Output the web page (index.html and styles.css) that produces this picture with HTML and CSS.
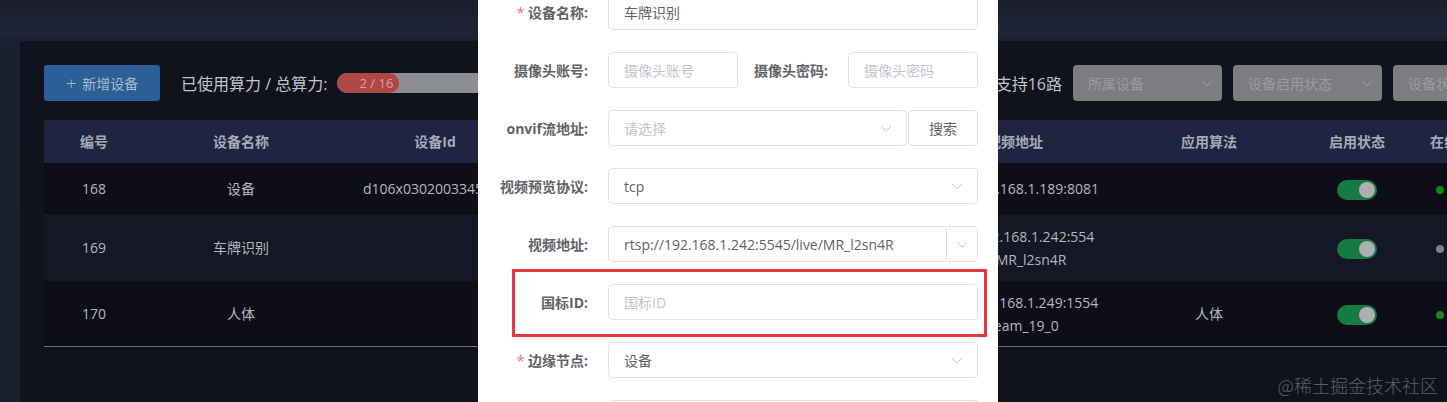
FILE: index.html
```html
<!DOCTYPE html>
<html lang="zh-CN">
<head>
<meta charset="utf-8">
<title>设备管理</title>
<link rel="stylesheet" href="styles.css">
</head>
<body>
<div class="page">
  <div class="card">
    <div class="toolbar">
      <button class="btn-add"><span class="plus">+</span> 新增设备</button>
      <span class="usage-label">已使用算力 / 总算力:</span>
      <div class="progress"><div class="progress-fill" style="width:62px">2 / 16</div></div>
      <span class="hint">最多支持16路</span>
      <div class="filter"><span>所属设备</span><svg class="chev" viewBox="0 0 12 7"><path d="M1 1 L6 6 L11 1"/></svg></div>
      <div class="filter"><span>设备启用状态</span><svg class="chev" viewBox="0 0 12 7"><path d="M1 1 L6 6 L11 1"/></svg></div>
      <div class="filter"><span>设备状态</span><svg class="chev" viewBox="0 0 12 7"><path d="M1 1 L6 6 L11 1"/></svg></div>
    </div>

    <div class="table">
      <div class="row head">
        <div class="cell">编号</div>
        <div class="cell">设备名称</div>
        <div class="cell">设备Id</div>
        <div class="cell">视频源类型</div>
        <div class="cell">视频地址</div>
        <div class="cell">应用算法</div>
        <div class="cell">启用状态</div>
        <div class="cell left">在线状态</div>
      </div>
      <div class="row body r1">
        <div class="cell">168</div>
        <div class="cell">设备</div>
        <div class="cell">d106x0302003345678</div>
        <div class="cell">onvif</div>
        <div class="cell">http://192.168.1.189:8081</div>
        <div class="cell"></div>
        <div class="cell"><span class="switch"><span class="knob"></span></span></div>
        <div class="cell left dotcell"><span class="dot on"></span>在线</div>
      </div>
      <div class="row body r2">
        <div class="cell">169</div>
        <div class="cell">车牌识别</div>
        <div class="cell"></div>
        <div class="cell">rtsp</div>
        <div class="cell">rtsp://192.168.1.242:554<br>/live/MR_l2sn4R</div>
        <div class="cell"></div>
        <div class="cell"><span class="switch"><span class="knob"></span></span></div>
        <div class="cell left dotcell"><span class="dot off"></span>离线</div>
      </div>
      <div class="row body r3">
        <div class="cell">170</div>
        <div class="cell">人体</div>
        <div class="cell"></div>
        <div class="cell">rtsp</div>
        <div class="cell">rtsp://192.168.1.249:1554<br>/stream_19_0</div>
        <div class="cell">人体</div>
        <div class="cell"><span class="switch"><span class="knob"></span></span></div>
        <div class="cell left dotcell"><span class="dot on"></span>在线</div>
      </div>
    </div>
  </div>

  <div class="modal">
    <div class="form">
      <div class="frow">
        <label class="flabel"><span class="req">*</span> 设备名称:</label>
        <div class="input"><span class="val">车牌识别</span></div>
      </div>
      <div class="frow">
        <label class="flabel">摄像头账号:</label>
        <div class="input small"><span class="ph">摄像头账号</span></div>
        <label class="flabel mid">摄像头密码:</label>
        <div class="input small"><span class="ph">摄像头密码</span></div>
      </div>
      <div class="frow">
        <label class="flabel">onvif流地址:</label>
        <div class="input select grow"><span class="ph">请选择</span><svg class="chev light" viewBox="0 0 12 7"><path d="M1 1 L6 6 L11 1"/></svg></div>
        <button class="btn-search">搜索</button>
      </div>
      <div class="frow">
        <label class="flabel">视频预览协议:</label>
        <div class="input select"><span class="val">tcp</span><svg class="chev light" viewBox="0 0 12 7"><path d="M1 1 L6 6 L11 1"/></svg></div>
      </div>
      <div class="frow">
        <label class="flabel">视频地址:</label>
        <div class="input combo">
          <div class="combo-main"><span class="val">rtsp://192.168.1.242:5545/live/MR_l2sn4R</span></div>
          <div class="combo-arrow"><svg class="chev light" viewBox="0 0 12 7"><path d="M1 1 L6 6 L11 1"/></svg></div>
        </div>
      </div>
      <div class="frow marked">
        <div class="mark"></div>
        <label class="flabel">国标ID:</label>
        <div class="input"><span class="ph">国标ID</span></div>
      </div>
      <div class="frow">
        <label class="flabel"><span class="req">*</span> 边缘节点:</label>
        <div class="input select"><span class="val">设备</span><svg class="chev light" viewBox="0 0 12 7"><path d="M1 1 L6 6 L11 1"/></svg></div>
      </div>
      <div class="frow">
        <label class="flabel">备注:</label>
        <div class="input"></div>
      </div>
    </div>
  </div>

  <div class="watermark">@稀土掘金技术社区</div>
</div>
</body>
</html>
```

FILE: styles.css
```css
* { box-sizing: border-box; }
html, body { margin: 0; padding: 0; }
body {
  width: 1447px;
  height: 402px;
  overflow: hidden;
  background: #1a1f2d;
  font-family: "Open Sans", "Noto Sans CJK SC", sans-serif;
  font-size: 14px;
}
.page {
  position: relative;
  width: 1447px;
  height: 402px;
  padding: 41px 0 0 20px;
  background: linear-gradient(180deg, #1a1e2c 0px, #1f2537 30px, #1b2030 41px, #1a1f2c 100%);
  overflow: hidden;
}
.card {
  width: 1520px;
  height: 400px;
  background: #10131e;
  border-radius: 4px 0 0 0;
  padding: 24px 0 0 24px;
}

/* toolbar */
.toolbar {
  display: flex;
  align-items: center;
  height: 36px;
  width: 1509px;
}
.btn-add {
  width: 116px;
  height: 36px;
  border: none;
  border-radius: 3px;
  background: #2a5f97;
  color: #aab9cb;
  font-family: inherit;
  font-size: 14px;
  padding: 0;
  margin-right: 21px;
}
.btn-add .plus { font-size: 19px; font-weight: 300; vertical-align: -1px; margin-right: 2px; }
.usage-label {
  color: #c2c4ca;
  font-size: 16px;
  margin-right: 10px;
  white-space: nowrap;
}
.progress {
  width: 400px;
  height: 20px;
  border-radius: 10px;
  background: #8d8e91;
  overflow: hidden;
}
.progress-fill {
  height: 20px;
  border-radius: 10px;
  background: #b14646;
  color: #d9a3a3;
  font-size: 13px;
  line-height: 20px;
  text-align: right;
  padding-right: 6px;
  white-space: nowrap;
}
.hint {
  flex: 1;
  text-align: right;
  color: #c2c4ca;
  font-size: 16px;
  white-space: nowrap;
  padding-right: 11px;
}
.filter {
  flex: none;
  width: 149px;
  height: 36px;
  margin-right: 11px;
  border-radius: 4px;
  background: #7c7d80;
  display: flex;
  align-items: center;
  justify-content: space-between;
  padding: 0 9px 0 15px;
  color: #9b9c9e;
  font-size: 14px;
}
.chev {
  width: 12px;
  height: 7px;
  fill: none;
  stroke: #9b9c9e;
  stroke-width: 1;
}
.chev.light { stroke: #c0c4cc; }

/* table */
.table {
  margin-top: 19px;
  width: 1500px;
}
.row {
  display: grid;
  grid-template-columns: 100px 194px 194px 392px 182px 206px 90px 116px;
  align-items: center;
}
.row .cell {
  text-align: center;
  white-space: nowrap;
  line-height: 23px;
}
.row .cell.left { text-align: left; padding-left: 28px; }
.row .cell.dotcell { padding-left: 34px; }
.head {
  height: 43px;
  background: #1e2541;
  color: #a7abb7;
  font-weight: 700;
}
.body { color: #b5b7bd; }
.r1 { height: 51px; background: #0d0e1a; border-bottom: 1px solid #0a0b13; }
.r2 { height: 67px; background: #131726; }
.r3 { height: 66px; background: #0d0e1a; border-bottom: 1px solid #6c6f7a; }
.switch {
  display: inline-block;
  width: 40px;
  height: 20px;
  border-radius: 10px;
  background: #177a40;
  position: relative;
  vertical-align: middle;
}
.knob {
  position: absolute;
  right: 2px;
  top: 2px;
  width: 16px;
  height: 16px;
  border-radius: 50%;
  background: #aeafb1;
}
.dot {
  display: inline-block;
  width: 8px;
  height: 8px;
  border-radius: 50%;
  margin-right: 8px;
  vertical-align: middle;
}
.dot.on { background: #16871a; }
.dot.off { background: #7f8082; }

/* modal */
.modal {
  position: absolute;
  left: 478px;
  top: -26px;
  width: 520px;
  height: 460px;
  background: #ffffff;
  padding-top: 20px;
}
.frow {
  display: flex;
  align-items: center;
  height: 36px;
  margin-bottom: 22px;
  position: relative;
}
.flabel {
  flex: none;
  width: 130px;
  padding-right: 20px;
  text-align: right;
  color: #606266;
  font-weight: 700;
  font-size: 14px;
  white-space: nowrap;
}
.flabel.mid { width: 110px; }
.req { color: #f56c6c; font-weight: 400; }
.input {
  width: 370px;
  height: 36px;
  border: 1px solid #dcdfe6;
  border-radius: 4px;
  display: flex;
  align-items: center;
  justify-content: space-between;
  padding: 0 14px 0 15px;
  font-size: 14px;
  background: #fff;
}
.input.small { width: 130px; }
.input.grow { width: 299px; margin-right: 1px; }
.val { color: #606266; }
.ph { color: #c0c4cc; }
.btn-search {
  width: 70px;
  height: 36px;
  border: 1px solid #dcdfe6;
  border-radius: 4px;
  background: #fff;
  color: #606266;
  font-family: inherit;
  font-size: 14px;
  padding: 0;
}
.input.combo { padding: 0; }
.combo-main {
  flex: 1;
  height: 34px;
  display: flex;
  align-items: center;
  padding-left: 15px;
  border-right: 1px solid #dcdfe6;
  border-radius: 0 4px 4px 0;
  white-space: nowrap;
}
.combo-arrow {
  width: 30px;
  display: flex;
  justify-content: center;
}
.mark {
  position: absolute;
  left: 34px;
  top: -15px;
  width: 475px;
  height: 68px;
  border: 3px solid #e23a40;
}

.watermark {
  position: absolute;
  right: 9px;
  bottom: 4px;
  color: #5c5f68;
  font-size: 18px;
  font-family: "Noto Sans CJK SC", sans-serif;
  font-weight: 300;
}
```
